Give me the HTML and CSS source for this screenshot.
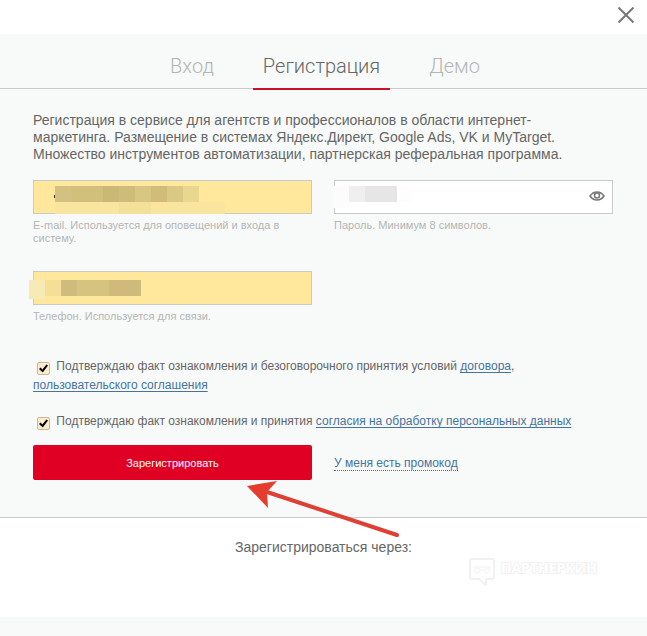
FILE: index.html
```html
<!DOCTYPE html>
<html lang="ru">
<head>
    <meta charset="UTF-8">
    <meta name="viewport" content="width=device-width, initial-scale=1.0">
    <title>Регистрация</title>
    <link rel="stylesheet" href="styles.css">
</head>
<body>
    <header class="topbar">
        <button class="close" type="button" aria-label="Закрыть">
            <svg width="18" height="18" viewBox="0 0 18 18"><path d="M1.500 1.500L16.500 16.500M16.500 1.500L1.500 16.500"/></svg>
        </button>
    </header>

    <nav class="tabs">
        <a href="#" class="tab">Вход</a>
        <a href="#" class="tab active">Регистрация</a>
        <a href="#" class="tab">Демо</a>
    </nav>

    <form class="form">
        <p class="intro">Регистрация в сервисе для агентств и профессионалов в области интернет-маркетинга. Размещение в системах Яндекс.Директ, Google Ads, VK и MyTarget. Множество инструментов автоматизации, партнерская реферальная программа.</p>

        <div class="fields">
            <div class="field">
                <div class="control">
                    <input type="email" id="email" class="filled">
                    <svg class="mask" width="192" height="28" viewBox="0 0 192 28" shape-rendering="crispEdges">
                        <path fill="#3d3522" d="M21 9h1v3h-1z"/>
                        <path fill="#d2c180" d="M22 0h16v16H22z"/>
                        <path fill="#d0c07c" d="M38 0h32v16H38z"/>
                        <path fill="#cbb877" d="M70 0h16v16H70z"/>
                        <path fill="#d0bc7a" d="M86 0h16v16H86z"/>
                        <path fill="#d8c782" d="M102 0h16v16h-16z"/>
                        <path fill="#d1bc79" d="M118 0h16v16h-16z"/>
                        <path fill="#d9c985" d="M134 0h16v16h-16z"/>
                        <path fill="#e9d68f" d="M150 0h16v16h-16z"/>
                        <path fill="#f9e4a0" d="M22 16h170v12H22z"/>
                        <path fill="#f5e09a" d="M86 16h32v12H86z"/>
                    </svg>
                </div>
                <label for="email">E-mail. Используется для оповещений и входа в систему.</label>
            </div>
            <div class="field">
                <div class="control">
                    <input type="password" id="password">
                    <svg class="mask" width="80" height="22" viewBox="0 0 80 22" shape-rendering="crispEdges">
                        <path fill="#fcfcfc" d="M0 0h15v22H0z"/>
                        <path fill="#efefef" d="M15 0h16v16H15z"/>
                        <path fill="#e6e6e6" d="M31 0h32v16H31z"/>
                        <path fill="#fdfdfd" d="M65 0h12v16H65z"/>
                    </svg>
                    <button class="eye" type="button" aria-label="Показать пароль">
                        <svg width="16" height="10" viewBox="0 0 16 10">
                            <path d="M1 5C3 2 5.500 1 8 1s5 1 7 4c-2 3-4.500 4-7 4S3 8 1 5z"/>
                            <circle cx="8" cy="4.500" r="2.500"/>
                        </svg>
                    </button>
                </div>
                <label for="password">Пароль. Минимум 8 символов.</label>
            </div>
            <div class="field">
                <div class="control">
                    <input type="tel" id="phone" class="filled">
                    <svg class="mask phone" width="112" height="19" viewBox="0 0 112 19" shape-rendering="crispEdges">
                        <path fill="#f8eab5" d="M0 0h16v19H0z"/>
                        <path fill="#f3df95" d="M16 0h16v16H16z"/>
                        <path fill="#cdbc7c" d="M32 0h16v16H32z"/>
                        <path fill="#d5c480" d="M48 0h32v16H48z"/>
                        <path fill="#d0ba7b" d="M80 0h16v16H80z"/>
                        <path fill="#ccbb7a" d="M96 0h16v16H96z"/>
                    </svg>
                </div>
                <label for="phone">Телефон. Используется для связи.</label>
            </div>
        </div>

        <div class="agree">
            <input type="checkbox" id="terms" checked>
            <label for="terms">Подтверждаю факт ознакомления и безоговорочного принятия условий <a href="#">договора</a>, <a href="#">пользовательского соглашения</a></label>
        </div>
        <div class="agree">
            <input type="checkbox" id="personal" checked>
            <label for="personal">Подтверждаю факт ознакомления и принятия <a href="#">согласия на обработку персональных данных</a></label>
        </div>

        <div class="actions">
            <button class="submit" type="submit">Зарегистрировать</button>
            <div><a href="#" class="promo">У меня есть промокод</a></div>
            <svg class="arrow" width="154" height="58" viewBox="0 0 154 58">
                <path class="line" d="M20 12L150 55"/>
                <path class="head" d="M0 6L30 1L20 12L21 28z"/>
            </svg>
        </div>
    </form>

    <section class="social">
        <p>Зарегистрироваться через:</p>
        <div class="watermark">
            <svg width="26" height="28" viewBox="0 0 26 28">
                <path d="M3 1h20q2 0 2 2v16q0 2-2 2h-6v6l-7-6H3q-2 0-2-2V3q0-2 2-2z"/>
                <path class="thin" d="M4 9h18M8 10a2.500 2.500 0 1 0 .1 0M18 10a2.500 2.500 0 1 0 .1 0M11 12h4"/>
            </svg>
            <span>ПАРТНЕРКИН</span>
        </div>
    </section>
</body>
</html>
```
FILE: styles.css
```css
* {
    box-sizing: border-box;
}

body {
    margin: 0;
    background-color: #f8faf9;
    color: #666;
    font-family: "Liberation Sans", Arial, sans-serif;
    font-size: 12px;
}

p {
    margin: 0;
}

button {
    font-family: inherit;
    border: none;
    padding: 0;
    cursor: pointer;
}

a {
    color: #4574a0;
    text-underline-offset: 2px;
}

.topbar {
    display: flex;
    justify-content: flex-end;
    height: 34px;
    padding: 6px 12px;
    background-color: #fff;
}

.close {
    width: 18px;
    height: 18px;
    background: none;
}

.close svg {
    display: block;
    fill: none;
    stroke: #74777c;
    stroke-width: 2;
}

.tabs {
    display: flex;
    justify-content: center;
    gap: 29px;
    height: 55px;
    padding-left: 3px;
    border-bottom: 1px solid #c8cbca;
}

.tab {
    height: 56px;
    padding: 0 10px;
    color: #b4b6b5;
    font-family: Roboto, sans-serif;
    font-size: 20px;
    font-weight: 300;
    line-height: 64px;
    text-decoration: none;
}

.tab.active {
    color: #666;
    border-bottom: 2px solid #c8102e;
}

.form {
    padding: 23px 34px 37px 33px;
    border-bottom: 1px solid #c8cbca;
}

.intro {
    margin-bottom: 17px;
    padding-right: 40px;
    font-size: 14px;
    line-height: 17px;
}

.fields {
    display: grid;
    grid-template-columns: 1fr 1fr;
    gap: 26px 22px;
    margin-bottom: 34px;
}

.control {
    position: relative;
    margin-bottom: 5px;
}

.control input {
    display: block;
    width: 100%;
    height: 34px;
    padding: 0 32px 0 10px;
    border: 1px solid #c8cbca;
    background-color: #fff;
}

.control .filled {
    background-color: #ffe89c;
}

.mask {
    position: absolute;
    top: 6px;
    left: 0;
}

.mask.phone {
    top: 9px;
    left: -4px;
}

.eye {
    position: absolute;
    top: 11px;
    right: 8px;
    width: 16px;
    height: 10px;
    background: none;
}

.eye svg {
    display: block;
    fill: none;
    stroke: #777;
    stroke-width: 1.5;
}

.field label {
    display: block;
    color: #b4b6b5;
    font-size: 11px;
    line-height: 13px;
}

.agree {
    margin-bottom: 17px;
    line-height: 19px;
}

.agree input {
    appearance: none;
    position: relative;
    width: 13px;
    height: 13px;
    margin: 0 3px 0 4px;
    border: 1px solid #cbb994;
    border-radius: 2px;
    background-color: #fdebce;
    vertical-align: -5px;
}

.agree input:checked::before {
    content: "";
    position: absolute;
    inset: 1px;
    background-color: #000;
    clip-path: polygon(0 55%, 18% 40%, 37% 60%, 82% 5%, 100% 18%, 42% 95%);
}

.actions {
    position: relative;
    display: grid;
    grid-template-columns: 1fr 1fr;
    align-items: center;
    gap: 22px;
    margin-top: -3px;
}

.submit {
    height: 35px;
    border-radius: 2px;
    background-color: #df0024;
    color: #fff;
    font-size: 11px;
}

.promo {
    border-bottom: 1px dotted #4574a0;
    text-decoration: none;
}

.arrow {
    position: absolute;
    z-index: 1;
    top: 35px;
    left: 214px;
}

.arrow .line {
    fill: none;
    stroke: #de4035;
    stroke-width: 4;
    stroke-linecap: round;
}

.arrow .head {
    fill: #e53c30;
}

.social {
    position: relative;
    height: 99px;
    padding-top: 21px;
    background-color: #fff;
    font-size: 14px;
    line-height: 17px;
    text-align: center;
}

.watermark {
    position: absolute;
    right: 50px;
    bottom: 31px;
    display: flex;
    gap: 6px;
    color: #fff;
    font-family: "Open Sans", sans-serif;
    font-size: 14px;
    font-weight: 700;
    line-height: 20px;
    -webkit-text-stroke: 2px #f1f1f1;
    paint-order: stroke fill;
}

.watermark svg {
    fill: none;
    stroke: #f1f1f1;
    stroke-width: 2;
}

.watermark .thin {
    stroke-width: 1;
}
```
